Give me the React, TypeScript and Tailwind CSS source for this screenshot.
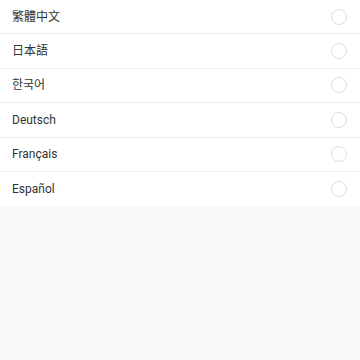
import React, { useState } from 'react';

const languages = ['繁體中文', '日本語', '한국어', 'Deutsch', 'Français', 'Español'];

export default function App() {
  const [selected, setSelected] = useState<string | null>(null);

  return (
    <div
      className="min-h-screen bg-[#f7f8fa] text-[#323233]"
      style={{ fontFamily: 'Roboto, "Noto Sans CJK TC", "Noto Sans CJK JP", "Noto Sans CJK KR", sans-serif' }}
    >
      <div className="bg-white">
        {languages.map((lang, idx) => (
          <div
            key={lang}
            onClick={() => setSelected(lang)}
            className={`h-[34.4px] px-3 flex items-center justify-between cursor-pointer ${
              idx < languages.length - 1 ? 'border-b border-[#ebedf0]' : ''
            }`}
          >
            <span className="text-[12px] leading-none">{lang}</span>
            <span
              className={`h-4 w-4 mr-px rounded-full border ${
                selected === lang ? 'border-[#1989fa] bg-[#1989fa]' : 'border-[#dcdee0]'
              }`}
            />
          </div>
        ))}
      </div>
    </div>
  );
}
